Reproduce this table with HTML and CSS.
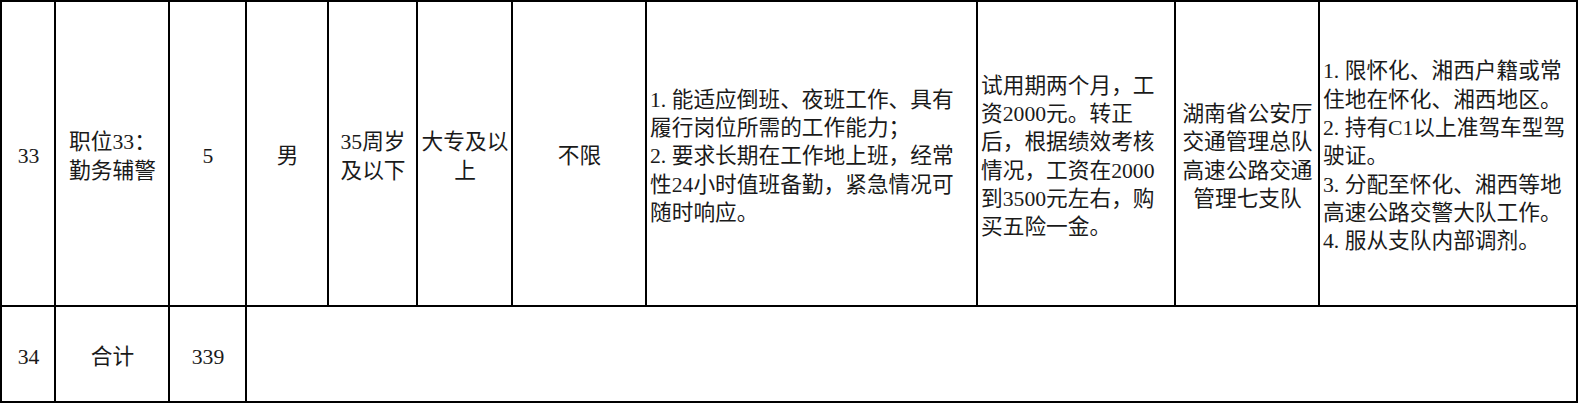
FILE: index.html
```html
<!DOCTYPE html>
<html lang="zh-CN">
<head>
<meta charset="utf-8">
<title>职位表</title>
<link rel="stylesheet" href="styles.css">
</head>
<body>
<div class="grid">
  <div class="cell ctr"><p class="txt">33</p></div>
  <div class="cell ctr"><p class="txt">职位33：<br>勤务辅警</p></div>
  <div class="cell ctr"><p class="txt">5</p></div>
  <div class="cell ctr"><p class="txt">男</p></div>
  <div class="cell ctr"><p class="txt">35周岁<br>及以下</p></div>
  <div class="cell ctr"><p class="txt">大专及以<br>上</p></div>
  <div class="cell ctr"><p class="txt">不限</p></div>
  <div class="cell lft"><p class="txt"><span class="num">1.</span>能适应倒班、夜班工作、具有<br>履行岗位所需的工作能力；<br><span class="num">2.</span>要求长期在工作地上班，经常<br>性24小时值班备勤，紧急情况可<br>随时响应。</p></div>
  <div class="cell lft"><p class="txt">试用期两个月，工<br>资2000元。转正<br>后，根据绩效考核<br>情况，工资在2000<br>到3500元左右，购<br>买五险一金。</p></div>
  <div class="cell ctr"><p class="txt">湖南省公安厅<br>交通管理总队<br>高速公路交通<br>管理七支队</p></div>
  <div class="cell lft"><p class="txt"><span class="num">1.</span>限怀化、湘西户籍或常<br>住地在怀化、湘西地区。<br><span class="num">2.</span>持有C1以上准驾车型驾<br>驶证。<br><span class="num">3.</span>分配至怀化、湘西等地<br>高速公路交警大队工作。<br><span class="num">4.</span>服从支队内部调剂。</p></div>

  <div class="cell ctr"><p class="txt">34</p></div>
  <div class="cell ctr"><p class="txt">合计</p></div>
  <div class="cell ctr"><p class="txt">339</p></div>
  <div class="cell ctr span-rest"></div>
</div>
</body>
</html>
```
FILE: styles.css
```css
html, body {
  margin: 0;
  padding: 0;
  background: #ffffff;
  overflow: hidden;
}

.grid {
  display: grid;
  grid-template-columns: 52px 112px 75px 80px 87px 93px 132px 329px 196px 142px 256px;
  grid-template-rows: 303px 94px;
  gap: 2px;
  padding: 2px;
  width: max-content;
  background: #000;
  font-family: "Liberation Serif", "Noto Sans CJK SC", serif;
  font-size: 21.7px;
  line-height: 28.3px;
  color: #1a1a1a;
}

.cell {
  background: #fff;
  display: flex;
  align-items: center;
  padding: 6px 2px 0 3px;
  white-space: nowrap;
  overflow: hidden;
}

.txt {
  margin: 0;
}

.ctr {
  justify-content: center;
  text-align: center;
}

.lft {
  justify-content: flex-start;
  text-align: left;
}

.num {
  display: inline-block;
  width: 1em;
}

.span-rest {
  grid-column: 4 / span 8;
}
```
